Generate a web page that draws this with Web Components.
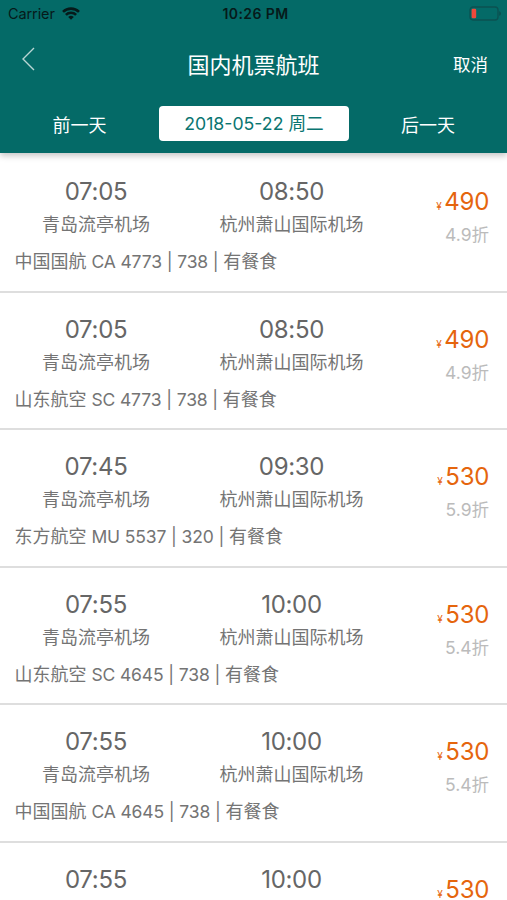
<!DOCTYPE html>
<html lang="zh-CN">
<head>
  <meta charset="UTF-8">
  <meta name="viewport" content="width=device-width, initial-scale=1.0">
  <title>国内机票航班</title>
  <style>
    html, body {
      margin: 0;
      padding: 0;
      height: 100%;
      overflow: hidden;
    }

    body {
      background: #fff;
      font-family: Inter, "Noto Sans CJK SC", sans-serif;
    }
  </style>
</head>
<body>
  <flight-app></flight-app>

  <script>
    class StatusBar extends HTMLElement {
      constructor() {
        super()
        this.shadowDOM = this.attachShadow({mode: 'open'})
      }

      connectedCallback() {
        this.shadowDOM.innerHTML = `
          <style>
            :host {
              display: grid;
              grid-template-columns: 1fr auto 1fr;
              align-items: center;
              height: 28px;
              padding: 0 6px 0 8px;
              color: #061a1a;
              font-size: 14.5px;
              line-height: 28px;
            }
            .carrier {
              display: flex;
              align-items: center;
              gap: 7px;
              letter-spacing: -0.1px;
            }
            .clock {
              padding-left: 2px;
              font-size: 14px;
              font-weight: 600;
              letter-spacing: 0.4px;
            }
            .battery {
              justify-self: end;
              margin-bottom: 2px;
            }
            svg {
              display: block;
            }
            .carrier svg {
              margin-bottom: 2px;
            }
          </style>
          <div class="carrier">
            <span><slot name="carrier"></slot></span>
            <svg width="18" height="13" viewBox="0 0 18 13">
              <g fill="none" stroke="#061a1a" stroke-width="2.6">
                <path d="M1 4.9a11.4 11.4 0 0 1 16 0"/>
                <path d="M3.9 7.9a7.3 7.3 0 0 1 10.2 0"/>
              </g>
              <path d="M9 12.8L6.2 10a4 4 0 0 1 5.6 0z" fill="#061a1a"/>
            </svg>
          </div>
          <span class="clock"><slot></slot></span>
          <svg class="battery" width="32" height="15" viewBox="0 0 32 15">
            <rect x="1" y="1" width="28" height="13" rx="3" fill="none" stroke="#0b5151" stroke-width="1.3"/>
            <rect x="2.6" y="2.7" width="4.6" height="9.6" rx="1.3" fill="#f0493b"/>
            <path d="M30.3 5.2c2 .6 2 4 0 4.6z" fill="#0b4a4a"/>
          </svg>
        `
      }
    }

    class NavHeader extends HTMLElement {
      constructor() {
        super()
        this.shadowDOM = this.attachShadow({mode: 'open'})
      }

      connectedCallback() {
        this.shadowDOM.innerHTML = `
          <style>
            :host {
              display: grid;
              grid-template-columns: 1fr auto 1fr;
              align-items: center;
              height: 74px;
              padding: 0 20px;
              color: #fff;
            }
            svg {
              display: block;
              margin-bottom: 12px;
            }
            h1 {
              margin: 0;
              font-size: 22px;
              font-weight: 400;
              line-height: 30px;
            }
            .action {
              justify-self: end;
              margin-right: -1px;
              font-size: 17.5px;
              line-height: 26px;
            }
          </style>
          <svg width="15" height="24" viewBox="0 0 15 24">
            <path d="M14 1L3 12l11 11" fill="none" stroke="#b9d6d4" stroke-width="1.4"/>
          </svg>
          <h1><slot></slot></h1>
          <span class="action"><slot name="action"></slot></span>
        `
      }
    }

    class DayPicker extends HTMLElement {
      constructor() {
        super()
        this.shadowDOM = this.attachShadow({mode: 'open'})
      }

      connectedCallback() {
        this.shadowDOM.innerHTML = `
          <style>
            :host {
              display: grid;
              grid-template-columns: 159px 190px 1fr;
              grid-template-rows: 35px;
              padding: 4px 0 12px;
              color: #fff;
              font-size: 18px;
              line-height: 39px;
              text-align: center;
            }
            .current {
              border-radius: 4px;
              background: #fff;
              color: #0a7571;
              font-size: 17.7px;
              line-height: 36px;
            }
          </style>
          <span><slot name="prev"></slot></span>
          <span class="current"><slot></slot></span>
          <span><slot name="next"></slot></span>
        `
      }
    }

    class FlightItem extends HTMLElement {
      constructor() {
        super()
        this.shadowDOM = this.attachShadow({mode: 'open'})
      }

      set flight(flight) {
        this._flight = flight
        this.render()
      }

      // airline, flight code, plane type and meal on one line
      get info() {
        const {airline, code, plane, meal} = this._flight
        return airline ? `<p class="info">${airline}<span> ${code} | ${plane} | </span>${meal}</p>` : ''
      }

      render() {
        this.shadowDOM.innerHTML = `
          <style>
            * {
              margin: 0;
              padding: 0;
              box-sizing: border-box;
            }
            :host {
              display: grid;
              grid-template-columns: 389px 1fr;
              box-sizing: border-box;
              height: 137.6px;
              border-bottom: 2px solid #dedede;
              color: #747474;
              white-space: nowrap;
            }
            .route {
              display: grid;
              grid-template-columns: 192px 199px;
              padding-top: 20px;
              text-align: center;
            }
            .time {
              color: #666;
              font-size: 24px;
              line-height: 34px;
              letter-spacing: -0.3px;
            }
            .airport {
              font-size: 18px;
              line-height: 32px;
            }
            .info {
              padding: 5px 0 0 14.6px;
              font-size: 18px;
              line-height: 32px;
            }
            .info span {
              font-size: 17.5px;
              letter-spacing: -0.13px;
            }
            .fare {
              padding: 30px 18px 0 0;
              text-align: right;
            }
            .price {
              color: #e5650d;
              font-size: 24px;
              line-height: 34px;
              letter-spacing: -0.3px;
            }
            .price small {
              margin-right: 3px;
              font-size: 10px;
            }
            .discount {
              margin-top: -4px;
              color: #bbb;
              font-size: 17.5px;
              line-height: 32px;
            }
          </style>
          <div>
            <div class="route">
              <div>
                <p class="time">${this._flight.depart}</p>
                <p class="airport">${this._flight.from}</p>
              </div>
              <div>
                <p class="time">${this._flight.arrive}</p>
                <p class="airport">${this._flight.to}</p>
              </div>
            </div>
            ${this.info}
          </div>
          <div class="fare">
            <p class="price"><small>¥</small>${this._flight.price}</p>
            <p class="discount">${this._flight.discount}</p>
          </div>
        `
      }
    }

    class FlightList extends HTMLElement {
      constructor() {
        super()
        this.shadowDOM = this.attachShadow({mode: 'open'})
      }

      set flights(flights) {
        this._flights = flights
        this.render()
      }

      render() {
        this.shadowDOM.innerHTML = `
          <style>
            :host {
              display: block;
              padding-top: 2px;
            }
          </style>
        `
        this._flights.forEach(flight => {
          const item = document.createElement('flight-item')
          item.flight = flight
          this.shadowDOM.appendChild(item)
        })
      }
    }

    const from = '青岛流亭机场'
    const to = '杭州萧山国际机场'
    const meal = '有餐食'

    const flights = [
      {depart: '07:05', arrive: '08:50', from, to, airline: '中国国航', code: 'CA 4773', plane: '738', meal, price: 490, discount: '4.9折'},
      {depart: '07:05', arrive: '08:50', from, to, airline: '山东航空', code: 'SC 4773', plane: '738', meal, price: 490, discount: '4.9折'},
      {depart: '07:45', arrive: '09:30', from, to, airline: '东方航空', code: 'MU 5537', plane: '320', meal, price: 530, discount: '5.9折'},
      {depart: '07:55', arrive: '10:00', from, to, airline: '山东航空', code: 'SC 4645', plane: '738', meal, price: 530, discount: '5.4折'},
      {depart: '07:55', arrive: '10:00', from, to, airline: '中国国航', code: 'CA 4645', plane: '738', meal, price: 530, discount: '5.4折'},
      {depart: '07:55', arrive: '10:00', from: '', to: '', price: 530, discount: ''}
    ]

    class FlightApp extends HTMLElement {
      constructor() {
        super()
        this.shadowDOM = this.attachShadow({mode: 'open'})
      }

      connectedCallback() {
        this.shadowDOM.innerHTML = `
          <style>
            :host {
              display: flex;
              flex-direction: column;
              width: 507px;
              height: 900px;
              overflow: hidden;
            }
            header {
              flex: none;
              z-index: 1;
              background: #046a67;
              box-shadow: 0 3px 6px rgba(0, 0, 0, 0.22);
            }
            flight-list {
              flex: none;
            }
          </style>
          <header>
            <status-bar><span slot="carrier">Carrier</span>10:26 PM</status-bar>
            <nav-header>国内机票航班<span slot="action">取消</span></nav-header>
            <day-picker>
              <span slot="prev">前一天</span>2018-05-22 周二<span slot="next">后一天</span>
            </day-picker>
          </header>
          <flight-list></flight-list>
        `
        this.shadowDOM.querySelector('flight-list').flights = flights
      }
    }

    customElements.define('status-bar', StatusBar)
    customElements.define('nav-header', NavHeader)
    customElements.define('day-picker', DayPicker)
    customElements.define('flight-item', FlightItem)
    customElements.define('flight-list', FlightList)
    customElements.define('flight-app', FlightApp)
  </script>
</body>
</html>
